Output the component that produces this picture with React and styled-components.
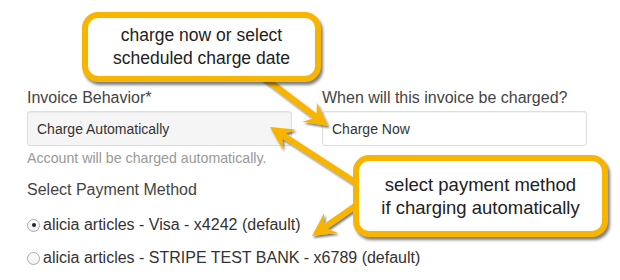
import React from "react";
import styled, { createGlobalStyle } from "styled-components";

const ORANGE = "#f8b500";

function arrowPoints([ax, ay], [tx, ty], shaft = 6, headLen = 23, headW = 24) {
  const len = Math.hypot(tx - ax, ty - ay);
  const dx = (tx - ax) / len;
  const dy = (ty - ay) / len;
  const nx = -dy;
  const ny = dx;
  const p = (x, y) => `${x.toFixed(1)},${y.toFixed(1)}`;
  const neckX = tx - dx * headLen * 0.72;
  const neckY = ty - dy * headLen * 0.72;
  const baseX = tx - dx * headLen;
  const baseY = ty - dy * headLen;
  return [
    p(ax + (nx * shaft) / 2, ay + (ny * shaft) / 2),
    p(neckX + (nx * shaft) / 2, neckY + (ny * shaft) / 2),
    p(baseX + (nx * headW) / 2, baseY + (ny * headW) / 2),
    p(tx, ty),
    p(baseX - (nx * headW) / 2, baseY - (ny * headW) / 2),
    p(neckX - (nx * shaft) / 2, neckY - (ny * shaft) / 2),
    p(ax - (nx * shaft) / 2, ay - (ny * shaft) / 2),
  ].join(" ");
}

const arrows = [
  { from: [262, 76], to: [328, 126] },
  { from: [358, 184], to: [270, 127] },
  { from: [358, 204], to: [312, 236] },
];

const methods = [
  { id: "visa", label: "alicia articles - Visa - x4242 (default)", checked: true },
  { id: "bank", label: "alicia articles - STRIPE TEST BANK - x6789 (default)", checked: false },
];

export default function App() {
  return (
    <>
      <GlobalStyle />
      <Page>
        <Row>
          <Field>
            <Label>Invoice Behavior*</Label>
            <Input $readonly>Charge Automatically</Input>
            <Help>Account will be charged automatically.</Help>
          </Field>
          <Field>
            <Label>When will this invoice be charged?</Label>
            <Input>Charge Now</Input>
          </Field>
        </Row>
        <SectionTitle>Select Payment Method</SectionTitle>
        <RadioList>
          {methods.map((m) => (
            <RadioRow key={m.id}>
              <Radio $checked={m.checked} />
              {m.label}
            </RadioRow>
          ))}
        </RadioList>

        <Arrows width="620" height="280" viewBox="0 0 620 280">
          <defs>
            <filter id="shadow" x="-20%" y="-20%" width="140%" height="140%">
              <feDropShadow dx="1.5" dy="2" stdDeviation="1.2" floodColor="#000" floodOpacity="0.55" />
            </filter>
          </defs>
          {arrows.map((a, i) => (
            <polygon
              key={i}
              points={arrowPoints(a.from, a.to)}
              fill={ORANGE}
              filter="url(#shadow)"
            />
          ))}
        </Arrows>

        <Callout $left={82} $top={12} $width={239} $height={70} $size={17.5}>
          charge now or select
          <br />
          scheduled charge date
        </Callout>
        <Callout $left={353} $top={155} $width={255} $height={82} $size={18.5}>
          select payment method
          <br />
          if charging automatically
        </Callout>
      </Page>
    </>
  );
}

const GlobalStyle = createGlobalStyle`
  html, body {
    margin: 0;
    padding: 0;
    background: #fff;
  }
  body {
    font-family: "Liberation Sans", Arial, Helvetica, sans-serif;
    color: #333;
  }
`;

const Page = styled.div`
  position: relative;
  width: 620px;
  height: 280px;
  overflow: hidden;
  box-sizing: border-box;
  padding: 89px 0 0 27px;
`;

const Row = styled.div`
  display: flex;
  gap: 30px;
`;

const Field = styled.div`
  display: flex;
  flex-direction: column;
  width: 265px;
`;

const Label = styled.div`
  font-size: 16px;
  line-height: 18px;
  color: #444;
  margin-bottom: 4px;
  white-space: nowrap;
`;

const Input = styled.div`
  box-sizing: border-box;
  height: 35px;
  display: flex;
  align-items: center;
  padding: 0 9px;
  font-size: 14px;
  color: #333;
  background: ${(p) => (p.$readonly ? "#f5f5f5" : "#fff")};
  border: 1px solid #ddd;
  border-radius: 3px;
  box-shadow: inset 0 1px 1px rgba(0, 0, 0, 0.05);
`;

const Help = styled.div`
  margin-top: 4px;
  font-size: 14.2px;
  line-height: 16px;
  color: #999;
  white-space: nowrap;
`;

const SectionTitle = styled.div`
  margin-top: 15px;
  font-size: 16px;
  line-height: 18px;
  color: #444;
`;

const RadioList = styled.div`
  display: flex;
  flex-direction: column;
  gap: 15px;
  margin-top: 17px;
`;

const RadioRow = styled.div`
  display: flex;
  align-items: center;
  gap: 3px;
  font-size: 16px;
  line-height: 18px;
  color: #333;
  white-space: nowrap;
`;

const Radio = styled.span`
  position: relative;
  box-sizing: border-box;
  width: 13px;
  height: 13px;
  border-radius: 50%;
  border: 1px solid #aaa;
  background: linear-gradient(#fff, #f0f0f0);
  flex-shrink: 0;

  &::after {
    content: "";
    display: ${(p) => (p.$checked ? "block" : "none")};
    position: absolute;
    left: 50%;
    top: 50%;
    width: 4px;
    height: 4px;
    margin: -2px 0 0 -2px;
    border-radius: 50%;
    background: #222;
  }
`;

const Arrows = styled.svg`
  position: absolute;
  left: 0;
  top: 0;
  pointer-events: none;
`;

const Callout = styled.div`
  position: absolute;
  left: ${(p) => p.$left}px;
  top: ${(p) => p.$top}px;
  width: ${(p) => p.$width}px;
  height: ${(p) => p.$height}px;
  box-sizing: border-box;
  display: flex;
  align-items: center;
  justify-content: center;
  text-align: center;
  background: #fff;
  border: 6px solid ${ORANGE};
  border-radius: 16px;
  box-shadow: 2px 3px 3px rgba(0, 0, 0, 0.5);
  font-size: ${(p) => p.$size}px;
  line-height: 23px;
  color: #222;
`;
